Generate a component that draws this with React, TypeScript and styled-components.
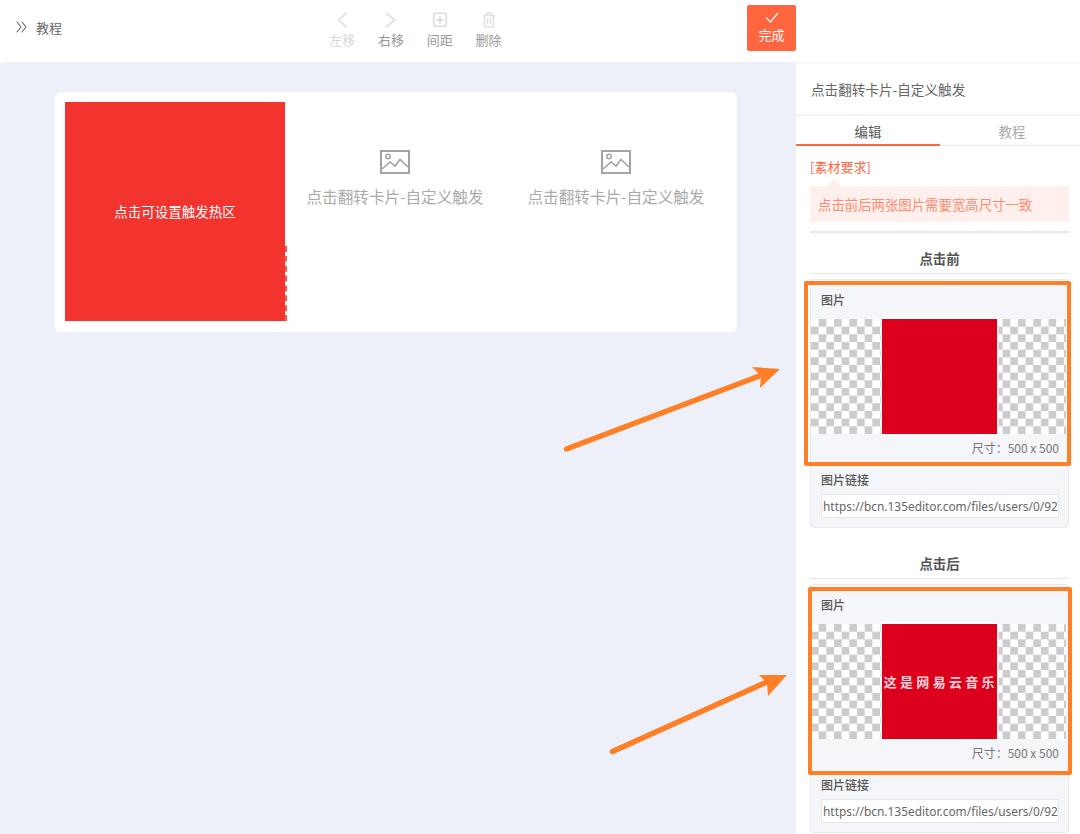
import React from "react";
import styled, { createGlobalStyle } from "styled-components";

const Global = createGlobalStyle`
  html, body { margin: 0; padding: 0; background: #fff; }
  body { font-family: "Noto Sans CJK SC", "Noto Sans", sans-serif; width: 1080px; height: 834px; overflow: hidden; }
`;

const Page = styled.div`
  position: relative;
  width: 1080px;
  height: 834px;
  overflow: hidden;
  display: flex;
  flex-direction: column;
`;

const Header = styled.header`
  height: 62px;
  flex: none;
  display: flex;
  align-items: flex-start;
  background: #fff;
`;
const Crumb = styled.div`
  width: 318px;
  height: 54px;
  padding-left: 16px;
  box-sizing: border-box;
  display: flex;
  align-items: center;
  gap: 9px;
  font-size: 13px;
  color: #666;
`;
const Toolbar = styled.div`
  display: flex;
  width: 195px;
  padding-top: 12px;
`;
const Tool = styled.div<{ $disabled?: boolean }>`
  width: 48.75px;
  display: flex;
  flex-direction: column;
  align-items: center;
  font-size: 13px;
  line-height: 18px;
  gap: 3px;
  color: ${(p) => (p.$disabled ? "#d3d9de" : "#999")};
  svg { display: block; }
`;
const DoneButton = styled.button`
  margin: 5px 0 0 234px;
  width: 49px;
  height: 46px;
  border: 0;
  padding: 7px 0 0;
  border-radius: 2px;
  background: #ff6640;
  color: #fff;
  font: 13px/18px "Noto Sans CJK SC", sans-serif;
  display: flex;
  flex-direction: column;
  align-items: center;
  gap: 2px;
  svg { display: block; }
`;

const Main = styled.main`
  flex: 1;
  display: flex;
  min-height: 0;
`;
const Canvas = styled.div`
  width: 796px;
  flex: none;
  box-sizing: border-box;
  background: #edf0f8;
  border-top-left-radius: 4px;
  padding: 30px 0 0 55px;
`;
const Stage = styled.div`
  width: 682px;
  height: 240px;
  box-sizing: border-box;
  background: #fff;
  border-radius: 6px;
  padding: 10px;
  display: flex;
`;
const HotCard = styled.div`
  width: 220px;
  height: 219px;
  flex: none;
  margin-right: -0.5px;
  padding-bottom: 2px;
  box-sizing: border-box;
  display: flex;
  align-items: center;
  justify-content: center;
  background: #f3342e;
  color: #fff;
  font-size: 13.5px;
  position: relative;
  &::after {
    content: "";
    position: absolute;
    right: -2px;
    top: 144px;
    bottom: 0;
    border-right: 2px dashed #f9584f;
  }
`;
const Placeholder = styled.div`
  width: 221px;
  flex: none;
  display: flex;
  flex-direction: column;
  align-items: center;
  padding-top: 48px;
  box-sizing: border-box;
  color: #aaa;
  font-size: 15.6px;
  line-height: 24px;
  gap: 10px;
  svg { display: block; }
`;

const Aside = styled.aside`
  flex: 1;
  background: #fff;
  border-top: 2px solid #f6f7fb;
  display: flex;
  flex-direction: column;
  min-width: 0;
`;
const PanelTitle = styled.div`
  height: 50px;
  flex: none;
  display: flex;
  align-items: center;
  padding-left: 15px;
  font-size: 13.6px;
  color: #666;
  border-bottom: 2px solid #f0f2f6;
`;
const Tabs = styled.div`
  display: flex;
  height: 29px;
  flex: none;
  border-bottom: 1px solid #e9ebef;
`;
const Tab = styled.div<{ $active?: boolean }>`
  width: 144px;
  flex: none;
  display: flex;
  align-items: center;
  justify-content: center;
  font-size: 13.4px;
  color: ${(p) => (p.$active ? "#555" : "#aaa")};
  box-shadow: ${(p) => (p.$active ? "inset 0 -1px 0 #ff6640, 0 1px 0 #ff6640" : "none")};
`;
const Body = styled.div`
  padding: 12px 11px 0 14px;
`;
const ReqLink = styled.div`
  font-size: 13px;
  line-height: 18px;
  color: #ff6640;
`;
const Notice = styled.div`
  position: relative;
  margin-top: 10px;
  height: 36px;
  display: flex;
  align-items: center;
  padding-left: 8px;
  background: #fff0ed;
  color: #ff8a6e;
  font-size: 13.4px;
  &::before {
    content: "";
    position: absolute;
    left: 17px;
    top: -7px;
    border: 7px solid transparent;
    border-top: 0;
    border-bottom-color: #fff0ed;
  }
`;
const Rule = styled.div`
  height: 2px;
  background: #e8e9ec;
  margin-top: 9px;
`;
const SectionTitle = styled.div<{ $top: number }>`
  margin-top: ${(p) => p.$top}px;
  height: 31px;
  padding-bottom: 1px;
  display: flex;
  align-items: center;
  justify-content: center;
  font-size: 13.4px;
  font-weight: 700;
  color: #555;
  border-bottom: 1px solid #e8eaee;
  box-sizing: border-box;
`;
const Card = styled.div`
  margin-top: 5px;
  height: 249px;
  box-sizing: border-box;
  background: #f5f6f9;
  border: 1px solid #e6e8ec;
  border-radius: 4px;
  display: flex;
  flex-direction: column;
`;
const FieldLabel = styled.div`
  height: 39px;
  flex: none;
  padding: 11px 0 0 10px;
  box-sizing: border-box;
  font-size: 12px;
  line-height: 18px;
  font-weight: 500;
  color: #555;
`;
const Checker = styled.div`
  width: 255px;
  height: 115px;
  flex: none;
  padding-left: 1.5px;
  box-sizing: border-box;
  display: flex;
  justify-content: center;
  background-color: #fff;
  background-image: repeating-conic-gradient(#cccccc 0 25%, #ffffff 0 50%);
  background-size: 15.34px 15.34px;
`;
const Picture = styled.div`
  width: 115px;
  height: 115px;
  display: flex;
  align-items: center;
  padding-left: 2px;
  box-sizing: border-box;
  background: #dc001c;
  box-shadow: 0 0 0 1.5px #fff;
  color: #f9d3d7;
  font-size: 13px;
  font-weight: 700;
  letter-spacing: 3.3px;
  white-space: nowrap;
  overflow: hidden;
`;
const SizeNote = styled.div`
  height: 26px;
  flex: none;
  padding-right: 9px;
  display: flex;
  align-items: center;
  justify-content: flex-end;
  font-size: 12px;
  color: #777;
`;
const LinkLabel = styled.div`
  flex: none;
  padding: 11px 0 0 10px;
  font-size: 12px;
  line-height: 18px;
  font-weight: 500;
  color: #555;
`;
const UrlInput = styled.div`
  margin: 5px 0 0 10px;
  width: 238px;
  height: 24px;
  box-sizing: border-box;
  border: 1px solid #e4e6ea;
  background: #fff;
  padding: 0 1px;
  font: 11.9px/22px "Noto Sans", "Open Sans", sans-serif;
  color: #666;
  white-space: nowrap;
  overflow: hidden;
`;

const Highlight = styled.div<{ $x: number; $y: number; $w: number; $h: number }>`
  position: absolute;
  left: ${(p) => p.$x}px;
  top: ${(p) => p.$y}px;
  width: ${(p) => p.$w}px;
  height: ${(p) => p.$h}px;
  box-sizing: border-box;
  border: 4px solid #ff7f27;
  border-radius: 2px;
  pointer-events: none;
`;
const ArrowLayer = styled.svg`
  position: absolute;
  left: 0;
  top: 0;
  pointer-events: none;
`;

const strokeProps = { fill: "none", strokeLinecap: "round" as const, strokeLinejoin: "round" as const };

const ImageIcon = () => (
  <svg width="30" height="24" viewBox="0 0 30 24">
    <rect x="1" y="1" width="28" height="22" fill="none" stroke="#a3a3a3" strokeWidth="2" />
    <circle cx="8" cy="6.5" r="2.2" fill="none" stroke="#a3a3a3" strokeWidth="1.5" />
    <path d="M2 19 L10 12 L15 16 L20 9.5 L28 17" fill="none" stroke="#a3a3a3" strokeWidth="1.6" />
  </svg>
);

const ImageField = ({ caption }: { caption?: string }) => (
  <Card>
    <FieldLabel>图片</FieldLabel>
    <Checker>
      <Picture>{caption}</Picture>
    </Checker>
    <SizeNote>尺寸：500 x 500</SizeNote>
    <LinkLabel>图片链接</LinkLabel>
    <UrlInput>https://bcn.135editor.com/files/users/0/92</UrlInput>
  </Card>
);

export default function App() {
  return (
    <Page>
      <Global />
      <Header>
        <Crumb>
          <svg width="11" height="12" viewBox="0 0 11 12">
            <path d="M1 1 L5 6 L1 11 M6 1 L10 6 L6 11" stroke="#666" strokeWidth="1.1" {...strokeProps} />
          </svg>
          教程
        </Crumb>
        <Toolbar>
          <Tool $disabled>
            <svg width="12" height="16" viewBox="0 0 12 16">
              <path d="M10 1.5 L2.5 8 L10 14.5" stroke="#dfe4e8" strokeWidth="2" {...strokeProps} />
            </svg>
            左移
          </Tool>
          <Tool>
            <svg width="12" height="16" viewBox="0 0 12 16">
              <path d="M2 1.5 L9.5 8 L2 14.5" stroke="#dfe4e8" strokeWidth="2" {...strokeProps} />
            </svg>
            右移
          </Tool>
          <Tool>
            <svg width="14" height="16" viewBox="0 0 14 16">
              <rect x="0.8" y="1.3" width="12.4" height="13" rx="1" fill="none" stroke="#d9dee3" strokeWidth="1.6" />
              <path d="M7 4.5 V11.5 M3.5 8 H10.5" stroke="#d0d5da" strokeWidth="1.4" fill="none" />
            </svg>
            间距
          </Tool>
          <Tool>
            <svg width="14" height="16" viewBox="0 0 14 16">
              <path d="M1 3.5 H13 M5 3.5 V1.2 H9 V3.5 M2.5 3.5 V15 H11.5 V3.5 M5.5 6 V12.5 M8.5 6 V12.5" stroke="#dde1e6" strokeWidth="1.4" fill="none" />
            </svg>
            删除
          </Tool>
        </Toolbar>
        <DoneButton>
          <svg width="14" height="12" viewBox="0 0 14 12">
            <path d="M1.5 6 L5.5 10 L12.5 1.5" stroke="#fff" strokeWidth="1.2" {...strokeProps} />
          </svg>
          完成
        </DoneButton>
      </Header>
      <Main>
        <Canvas>
          <Stage>
            <HotCard>点击可设置触发热区</HotCard>
            <Placeholder>
              <ImageIcon />
              点击翻转卡片-自定义触发
            </Placeholder>
            <Placeholder>
              <ImageIcon />
              点击翻转卡片-自定义触发
            </Placeholder>
          </Stage>
        </Canvas>
        <Aside>
          <PanelTitle>点击翻转卡片-自定义触发</PanelTitle>
          <Tabs>
            <Tab $active>编辑</Tab>
            <Tab>教程</Tab>
          </Tabs>
          <Body>
            <ReqLink>[素材要求]</ReqLink>
            <Notice>点击前后两张图片需要宽高尺寸一致</Notice>
            <Rule />
            <SectionTitle $top={10}>点击前</SectionTitle>
            <ImageField />
            <SectionTitle $top={20}>点击后</SectionTitle>
            <ImageField caption="这是网易云音乐" />
          </Body>
        </Aside>
      </Main>
      <Highlight $x={804} $y={281} $w={267} $h={185} />
      <Highlight $x={808} $y={587} $w={264} $h={188} />
      <ArrowLayer width="1080" height="834" viewBox="0 0 1080 834">
        <path d="M566.5 449 L762 375" stroke="#ff7f27" strokeWidth="5.5" strokeLinecap="round" fill="none" />
        <path d="M752 367 L780 369 L760 388 L761 376 Z" fill="#ff7f27" />
        <path d="M612.5 751.5 L767 682" stroke="#ff7f27" strokeWidth="5.5" strokeLinecap="round" fill="none" />
        <path d="M759 675 L787 675 L768 696 L767 683 Z" fill="#ff7f27" />
      </ArrowLayer>
    </Page>
  );
}
